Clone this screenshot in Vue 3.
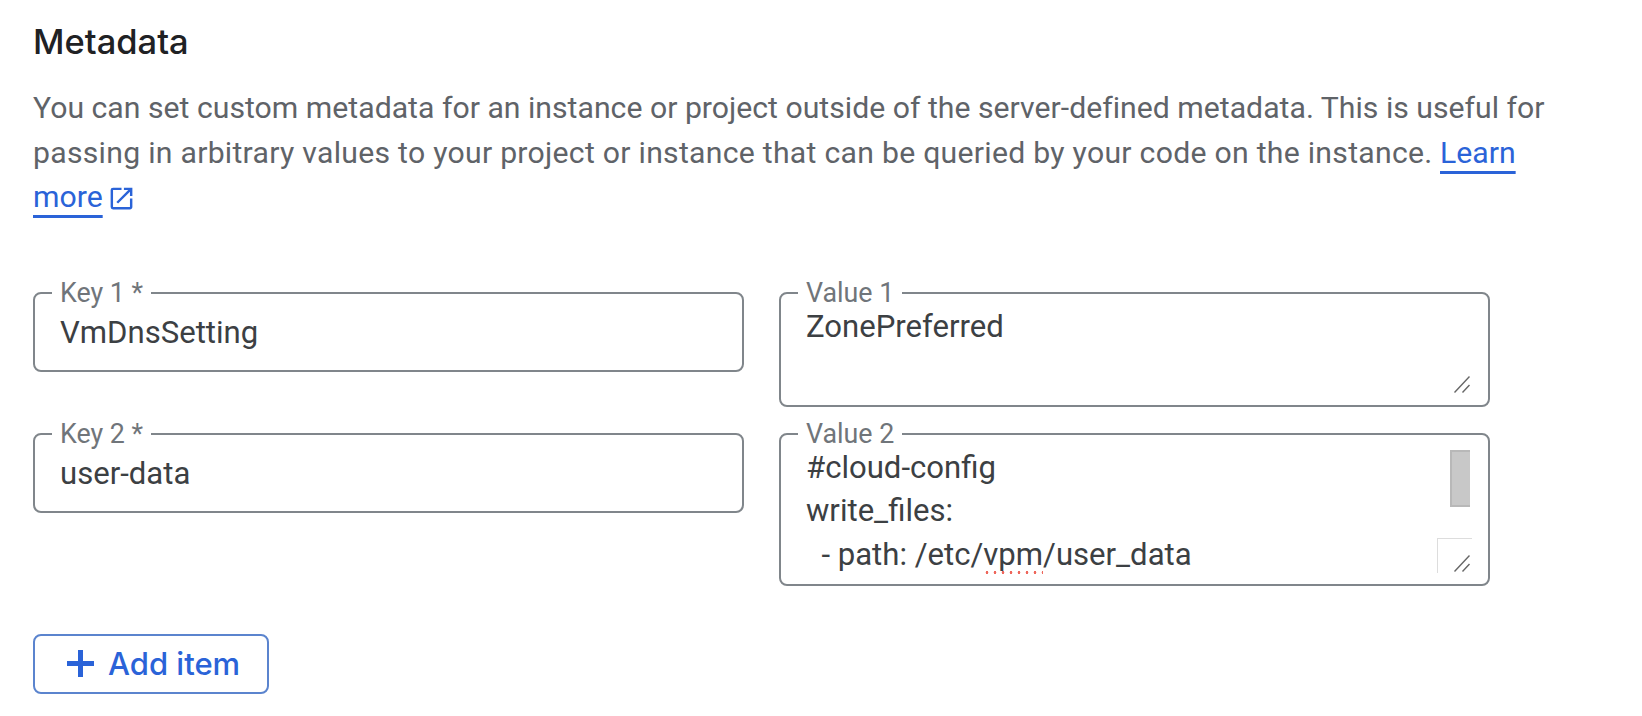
<script setup>
const rows = [
  { key: 'Key 1 *', keyValue: 'VmDnsSetting', label: 'Value 1', tall: false },
  { key: 'Key 2 *', keyValue: 'user-data', label: 'Value 2', tall: true }
]
</script>

<template>
  <main class="page">
    <h2 class="title">Metadata</h2>
    <p class="desc">
      You can set custom metadata for an instance or project outside of the server-defined metadata. This is useful for
      <span class="wide">passing in arbitrary values to your project or instance that can be queried by your code on the instance.</span>{{ ' ' }}<a class="link">Learn more</a><svg class="ext" viewBox="0 0 24 24" width="29" height="29"><path fill="currentColor" d="M19 19H5V5h7V3H5a2 2 0 0 0-2 2v14a2 2 0 0 0 2 2h14c1.1 0 2-.9 2-2v-7h-2v7zM14 3v2h3.59l-9.83 9.83 1.41 1.41L19 6.41V10h2V3h-7z"/></svg>
    </p>
    <div class="grid">
      <template v-for="r in rows" :key="r.key">
        <fieldset class="field key">
          <legend>{{ r.key }}</legend>
          <div class="val">{{ r.keyValue }}</div>
        </fieldset>
        <fieldset class="field value" :class="{ tall: r.tall }">
          <legend>{{ r.label }}</legend>
          <div v-if="!r.tall" class="val single">ZonePreferred</div>
          <div v-else class="val multi">
            <div>#cloud-config</div>
            <div>write_files:</div>
            <div>&nbsp; - path: /etc/<span class="spell">vpm</span>/user_data</div>
          </div>
          <span v-if="r.tall" class="thumb"></span>
          <span v-if="r.tall" class="corner"></span>
          <svg class="grip" viewBox="0 0 16 17" width="16" height="17"><path d="M0.5 16.5 L15.5 0.5 M8.5 16.5 L15.5 9" stroke="#666" stroke-width="1.4" fill="none"/></svg>
        </fieldset>
      </template>
    </div>
    <button class="add">
      <svg viewBox="0 0 27 27" width="27" height="27"><path fill="currentColor" d="M11 0h5v11h11v5H16v11h-5V16H0v-5h11z"/></svg>
      <span>Add item</span>
    </button>
  </main>
</template>

<style>
html, body { margin: 0; background: #fff; }
</style>

<style scoped>
.page {
  width: 1642px;
  height: 716px;
  box-sizing: border-box;
  padding: 22px 0 0 33px;
  overflow: hidden;
  font-family: Roboto, sans-serif;
}
.title {
  margin: 0;
  font: 500 34.5px/40px Inter, Roboto, sans-serif;
  color: #202124;
}
.desc {
  margin: 24px 0 0;
  width: 1525px;
  font-size: 30.2px;
  letter-spacing: 0.01px;
  line-height: 44.5px;
  color: #5f6368;
}
.wide { letter-spacing: 0.27px; }
.link {
  color: #2a63d8;
  text-decoration: underline;
  text-underline-offset: 8px;
  text-decoration-thickness: 2.5px;
}
.ext {
  color: #2a63d8;
  vertical-align: -6px;
  margin-left: 4px;
}
.grid {
  margin-top: 58px;
  display: grid;
  grid-template-columns: 711px 711px;
  column-gap: 35px;
  row-gap: 12px;
  align-items: start;
}
.field {
  margin: 0;
  padding: 0 25px;
  border: 2px solid #80868b;
  border-radius: 8px;
  box-sizing: border-box;
  position: relative;
  min-width: 0;
}
.field legend {
  padding: 0 8px;
  margin-left: -8px;
  font-size: 26.8px;
  line-height: 30px;
  color: #70757a;
}
.key { height: 94px; }
.value { height: 129px; }
.value.tall { height: 167px; }
.val {
  font-size: 31.1px;
  line-height: 40px;
  color: #3c4043;
}
.key .val { margin-top: 5px; }
.single { margin-top: -1px; }
.multi { margin-top: -3px; line-height: 43.5px; }
.spell {
  background: radial-gradient(circle, #ee675c 1.2px, transparent 1.6px) 0 100% / 8px 3px repeat-x;
  padding-bottom: 1px;
}
.thumb {
  position: absolute;
  right: 18px;
  top: 1px;
  width: 20px;
  height: 57px;
  box-sizing: border-box;
  background: #c8c8c8;
  border-top: 2px solid #b8b8b8;
  border-left: 2px solid #b8b8b8;
  border-bottom: 2px solid #b8b8b8;
}
.corner {
  position: absolute;
  right: 16px;
  bottom: 11px;
  width: 35px;
  height: 35px;
  border-left: 1px solid #ddd;
  border-top: 1px solid #ddd;
  box-sizing: border-box;
}
.grip {
  position: absolute;
  right: 18px;
  bottom: 12px;
}
.add {
  margin-top: 48px;
  width: 236px;
  height: 60px;
  box-sizing: border-box;
  display: flex;
  align-items: center;
  gap: 14px;
  border: 2px solid #5b84ce;
  border-radius: 8px;
  background: #fff;
  color: #2a63d8;
  font: 500 31px/1 Inter, Roboto, sans-serif;
  padding: 0 0 0 32px;
}
</style>
